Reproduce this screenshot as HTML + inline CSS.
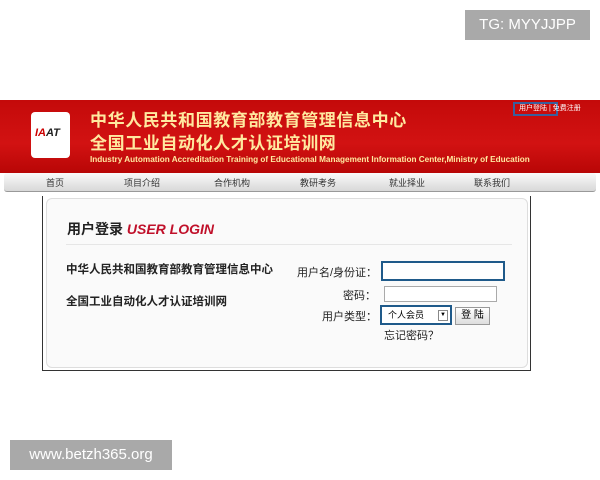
<!DOCTYPE html>
<html><head><meta charset="utf-8"><style>
body{margin:0;width:600px;height:480px;background:#fff;position:relative;overflow:hidden;font-family:"Liberation Sans","Noto Sans CJK SC",sans-serif}
.a{position:absolute}
.tg{left:465px;top:10px;width:125px;height:30px;background:#a9a9a9;color:#fff;font-size:15px;line-height:30px;text-align:center}
.wm{left:10px;top:440px;width:162px;height:30px;background:#a9a9a9;color:#fff;font-size:15px;line-height:30px;text-align:center}
.hdr{left:0;top:100px;width:600px;height:73px;background:linear-gradient(#c40a0a,#d21212 60%,#b80606)}
.nav{left:4px;top:173px;width:592px;height:18px;background:linear-gradient(#fafafa,#d8d8d8);border-radius:3px;border-bottom:1px solid #999;font-size:9px;color:#333}
.nav span{position:absolute;top:3px}
.logo{left:31px;top:112px;width:39px;height:46px;background:#fff;border-radius:4px}
.t1{left:90px;top:106px;color:#ffe9a0;font-size:17px;font-weight:bold;letter-spacing:0.6px}
.t2{left:90px;top:129px;color:#ffe9a0;font-size:17px;font-weight:bold;letter-spacing:0.6px}
.t3{left:90px;top:155px;color:#ffe9a0;font-size:8.2px;font-weight:bold;white-space:nowrap}
.box{left:42px;top:196px;width:487px;height:174px;border:1px solid #333;border-top:none;background:#fff}
.inner{left:46px;top:198px;width:480px;height:168px;background:#fafafa;border:1px solid #ddd;border-radius:6px}
.lbl{font-size:11px;color:#222}
input{position:absolute;border:1px solid #aaa;background:#fff;padding:0;margin:0}
</style></head><body>
<div class="a tg">TG: MYYJJPP</div>
<div class="a hdr"></div>
<div class="a" style="left:513px;top:102px;width:45px;height:14px;border:2px solid #3a5f9c;box-sizing:border-box"></div>
<div class="a" style="left:519px;top:103px;font-size:7px;color:#fff">用户登陆 | 免费注册</div>
<div class="a logo"><div class="a" style="left:4px;top:15px;font-size:11px;font-weight:bold;font-style:italic;color:#c00">IA<span style="color:#222">AT</span></div></div>
<div class="a t1">中华人民共和国教育部教育管理信息中心</div>
<div class="a t2">全国工业自动化人才认证培训网</div>
<div class="a t3">Industry Automation Accreditation Training of Educational Management Information Center,Ministry of Education</div>
<div class="a nav"><span style="left:42px">首页</span><span style="left:120px">项目介绍</span><span style="left:210px">合作机构</span><span style="left:296px">教研考务</span><span style="left:385px">就业择业</span><span style="left:470px">联系我们</span></div>
<div class="a box"></div>
<div class="a inner"></div>
<div class="a" style="left:67px;top:219px;font-size:14px;font-weight:bold;color:#222">用户登录 <i style="color:#c0102a;font-size:14px">USER LOGIN</i></div>
<div class="a" style="left:66px;top:244px;width:446px;height:1px;background:#e6e6e6"></div>
<div class="a lbl" style="left:66px;top:261px;font-weight:bold;font-size:11.5px">中华人民共和国教育部教育管理信息中心</div>
<div class="a lbl" style="left:66px;top:293px;font-weight:bold;font-size:11.5px">全国工业自动化人才认证培训网</div>
<div class="a lbl" style="left:297px;top:264px">用户名/身份证：</div>
<input style="left:381px;top:261px;width:120px;height:16px;border:2px solid #1f5a8a">
<div class="a lbl" style="left:343px;top:287px">密码：</div>
<input style="left:384px;top:286px;width:111px;height:14px">
<div class="a lbl" style="left:322px;top:308px">用户类型：</div>
<div class="a" style="left:380px;top:305px;height:16px;border:2px solid #1f5a8a;background:#fff;font-size:9px;line-height:16px;padding-left:6px;width:62px">个人会员<span style="position:absolute;right:2px;top:3px;width:8px;height:9px;border:1px solid #888;font-size:6px;line-height:9px;text-align:center">▼</span></div>
<div class="a" style="left:455px;top:307px;width:33px;height:16px;border:1px solid #999;background:linear-gradient(#fff,#ddd);font-size:10px;line-height:16px;text-align:center">登 陆</div>
<div class="a lbl" style="left:384px;top:327px">忘记密码？</div>
<div class="a wm">www.betzh365.org</div>
</body></html>
